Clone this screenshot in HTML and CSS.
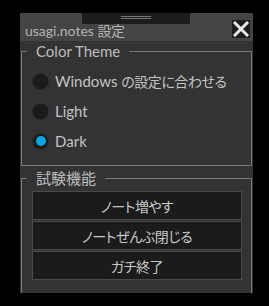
FILE: index.html
```html
<!DOCTYPE html>
<html lang="ja">
<head>
<meta charset="utf-8">
<title>usagi.notes 設定</title>
<link rel="stylesheet" href="styles.css">
</head>
<body>
<div class="window">
  <div class="titlebar">
    <div class="grip"><span></span><span></span></div>
    <span class="title">usagi.notes <span class="ja">設定</span></span>
    <button class="close-btn" aria-label="閉じる">
      <svg width="16" height="16" viewBox="0 0 16 16"><path d="M2 2 L14 14 M14 2 L2 14" stroke="#e8e8e8" stroke-width="3" stroke-linecap="square"/></svg>
    </button>
  </div>
  <fieldset class="group theme">
    <legend>Color Theme</legend>
    <label class="radio"><input type="radio" name="theme"><span class="dot"></span>Windows&nbsp;<span class="ja">の設定に合わせる</span></label>
    <label class="radio"><input type="radio" name="theme"><span class="dot"></span>Light</label>
    <label class="radio"><input type="radio" name="theme" checked><span class="dot"></span>Dark</label>
  </fieldset>
  <fieldset class="group tests">
    <legend>試験機能</legend>
    <button class="action ja">ノート増やす</button>
    <button class="action ja">ノートぜんぶ閉じる</button>
    <button class="action ja">ガチ終了</button>
  </fieldset>
</div>
</body>
</html>
```
FILE: styles.css
```css
body {
  margin: 0;
  background: #000;
  padding: 13px 0 0 20px;
  font-family: "Lato", "Noto Sans CJK JP", sans-serif;
}
.ja {
  font-family: "Noto Sans CJK JP", sans-serif;
  font-feature-settings: "palt";
  letter-spacing: -0.5px;
}
.window {
  position: relative;
  width: 233px;
  height: 280px;
  background: #333;
  color: #ccc;
}
.titlebar {
  height: 28px;
  background: #444;
  display: flex;
  align-items: center;
  justify-content: space-between;
  padding: 0 3px 0 5px;
}
.grip {
  position: absolute; left: 62px; top: 0; width: 108px; height: 11px;
  background: #1c1c1c;
  display: flex; flex-direction: column; align-items: center; padding-top: 3px; gap: 1px;
  box-sizing: border-box;
}
.grip span { width: 30px; height: 1px; background: #777; }
.title { font-size: 14px; color: #b4b4b4; margin-top: 6px; white-space: nowrap; }
.close-btn {
  width: 18px; height: 18px; padding: 0; border: none;
  background: #1e1e1e; display: flex; align-items: center; justify-content: center;
  margin-top: 4px;
}
.group {
  margin: 0 1px;
  padding: 0 10px 0 10px;
  border: 1px solid #7a7a7a;
  min-width: 0;
}
.group legend {
  margin-left: -5px;
  padding: 0 9px 0 9px;
  font-size: 15px;
  color: #bdbdbd;
  line-height: 18px;
}
.theme { height: 124px; box-sizing: border-box; margin-top: 1px; padding-top: 6px; }
.radio {
  display: flex; align-items: center; height: 30px;
  font-size: 15px; color: #c4c4c4; white-space: nowrap;
}
.radio .ja { font-size: 14px; }
.radio input { display: none; }
.dot {
  width: 15px; height: 15px; border-radius: 50%;
  background: #1b1b1b; border: 1px solid #2a2a2a;
  margin-right: 6px; display: flex; align-items: center; justify-content: center;
}
.radio input:checked + .dot::after {
  content: ""; width: 10px; height: 10px; border-radius: 50%; background: #0aa6e4;
}
.tests { margin-top: 3px; height: 125px; box-sizing: border-box; padding-top: 4px; display: flex; flex-direction: column; gap: 1px; }
.action {
  width: 210px; height: 29px;
  background: #1b1b1b; border: 1px solid #4a4a4a;
  color: #c8c8c8; font-size: 14px;
  padding: 0;
}
```
